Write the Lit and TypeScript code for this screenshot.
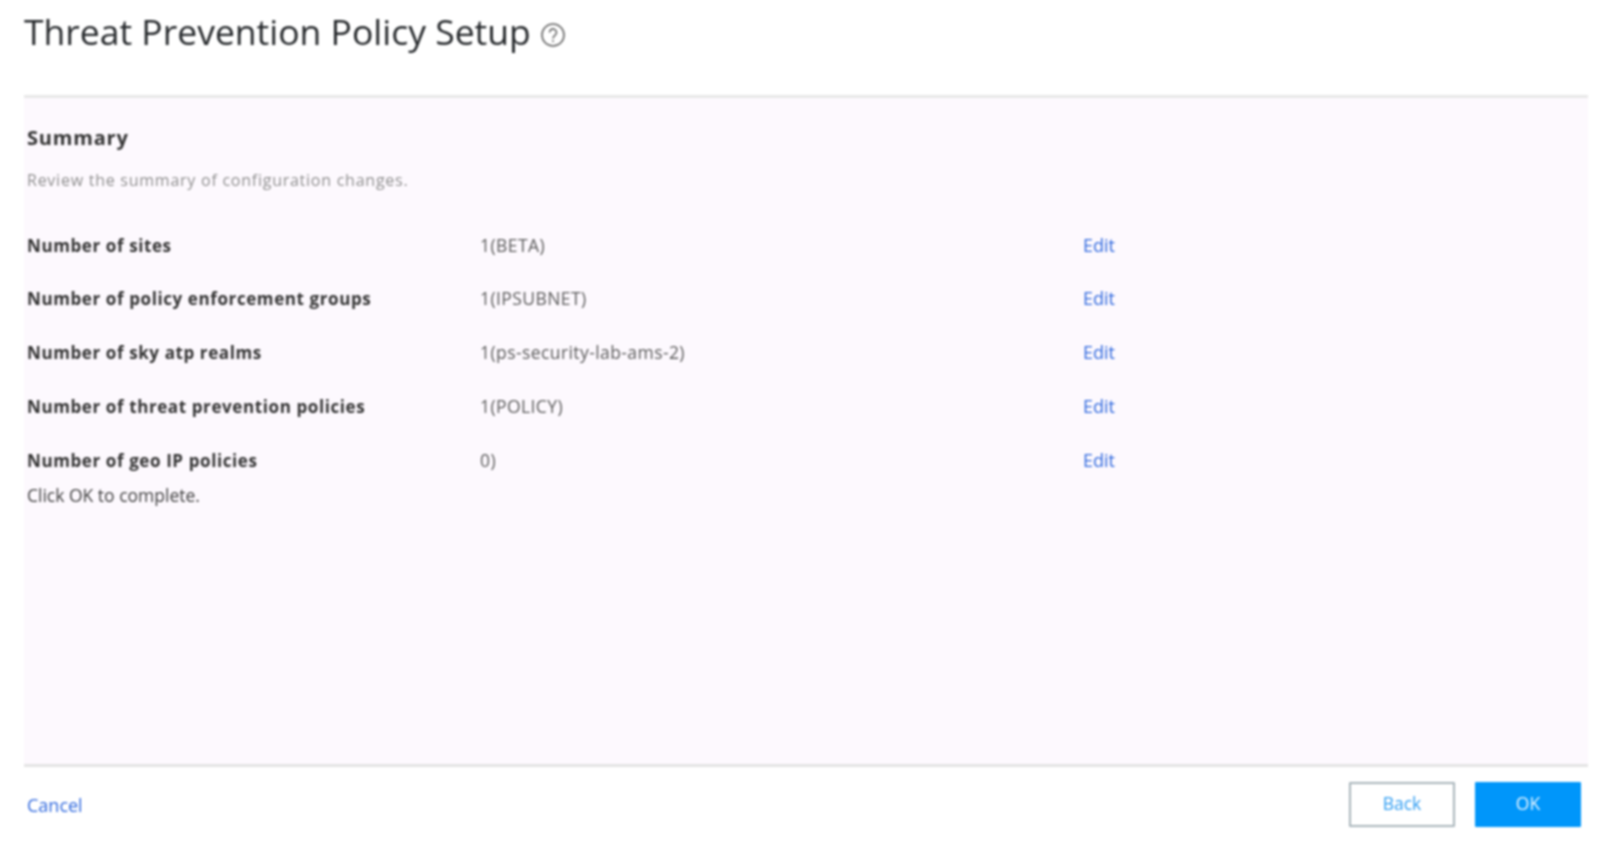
import { LitElement, html, css } from "lit";
import { customElement } from "lit/decorators.js";

const rows = [
  ["Number of sites", "1(BETA)"],
  ["Number of policy enforcement groups", "1(IPSUBNET)"],
  ["Number of sky atp realms", "1(ps-security-lab-ams-2)"],
  ["Number of threat prevention policies", "1(POLICY)"],
  ["Number of geo IP policies", "0)"],
];

@customElement("app-root")
export class AppRoot extends LitElement {
  static styles = css`
    :host {
      display: block;
      width: 1598px;
      height: 848px;
      background: #fff;
      font-family: "Open Sans", sans-serif;
      color: #444;
      overflow: hidden;
    }
    .page { display: flex; flex-direction: column; height: 848px; padding: 0 10px 0 24px; box-sizing: border-box; filter: blur(0.8px); }
    .head { height: 95px; display: flex; align-items: flex-start; gap: 9px; padding-top: 8px; box-sizing: border-box; }
    h1 { margin: 0; font-size: 35.5px; line-height: 46px; font-weight: 400; color: #26292c; }
    .help { margin-top: 14px; flex: none; }
    .panel { height: 672px; box-sizing: border-box; background: #fdf9fe; border-top: 3px solid #e8e8e8; border-bottom: 3px solid #e4e4e4; padding: 27px 3px 0; }
    h2 { margin: 0; font-size: 20px; line-height: 26px; font-weight: 700; color: #333; letter-spacing: 0.8px; }
    .sub { margin: 18px 0 0; font-size: 16px; line-height: 22px; color: #8f8f8f; letter-spacing: 0.75px; }
    .rows { margin-top: 42.5px; display: flex; flex-direction: column; gap: 30.75px; }
    .row { display: grid; grid-template-columns: 453px 603px auto; align-items: baseline; font-size: 17px; line-height: 23px; }
    .row b { font-weight: 700; color: #333; font-size: 17px; letter-spacing: 0.6px; }
    .row span { color: #5a5a5a; font-size: 17.5px; letter-spacing: 0.42px; }
    a { color: #2f68de; text-decoration: none; }
    .row a { font-size: 18px; }
    .done { margin: 12.5px 0 0; font-size: 17.5px; line-height: 23px; color: #3f3f3f; }
    .foot { flex: 1; display: flex; align-items: center; justify-content: space-between; padding: 0 7px 0 3px; }
    .foot a { font-size: 18px; margin-top: -6px; }
    .btns { display: flex; gap: 20px; margin-top: -7px; }
    button { width: 106px; height: 45px; font: 400 17.5px "Open Sans", sans-serif; box-sizing: border-box; border-radius: 1px; padding: 0 0 2px; }
    .back { background: #fff; border: 2px solid #a9b5bb; color: #2f9df2; }
    .ok { background: #0096fa; border: 0; color: #e6f5ff; }
  `;

  render() {
    return html`<div class="page">
      <div class="head">
        <h1>Threat Prevention Policy Setup</h1>
        <svg class="help" width="26" height="26" viewBox="0 0 26 26" fill="none" stroke="#666" stroke-width="1.6">
          <circle cx="13" cy="13" r="11"></circle>
          <path d="M9.5 10.5a3.5 3.5 0 1 1 5.4 2.9c-1.3.9-1.9 1.5-1.9 3"></path>
          <path d="M13 18.2v1.8"></path>
        </svg>
      </div>
      <div class="panel">
        <h2>Summary</h2>
        <p class="sub">Review the summary of configuration changes.</p>
        <div class="rows">
          ${rows.map(([k, v]) => html`<div class="row"><b>${k}</b><span>${v}</span><a href="#">Edit</a></div>`)}
        </div>
        <p class="done">Click OK to complete.</p>
      </div>
      <div class="foot">
        <a href="#">Cancel</a>
        <div class="btns"><button class="back">Back</button><button class="ok">OK</button></div>
      </div>
    </div>`;
  }
}
